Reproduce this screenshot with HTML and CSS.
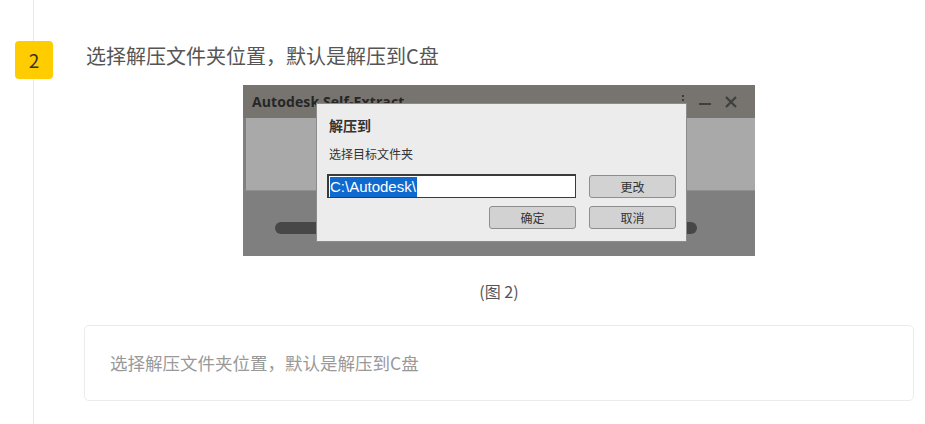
FILE: index.html
```html
<!DOCTYPE html>
<html lang="zh-CN">
<head>
<meta charset="utf-8">
<title>步骤 2</title>
<link rel="stylesheet" href="styles.css">
</head>
<body>
<div class="timeline">
  <div class="step">
    <div class="badge">2</div>
    <div class="content">
      <p class="step-title">选择解压文件夹位置，默认是解压到C盘</p>
      <figure class="figure">
        <div class="shot">
          <div class="win-title">
            <span class="win-name">Autodesk Self-Extract</span>
            <span class="win-ctrls">
              <svg class="ctl-dots" width="4" height="8" viewBox="0 0 4 8"><rect x="1" y="0" width="2" height="2" fill="#3c3c3c"/><rect x="1" y="4" width="2" height="2" fill="#3c3c3c"/></svg>
              <svg class="ctl-min" width="12" height="12" viewBox="0 0 12 12"><rect x="0" y="7" width="12" height="2" fill="#3f3f3f"/></svg>
              <svg class="ctl-close" width="12" height="12" viewBox="0 0 12 12"><path d="M1 1 L11 11 M11 1 L1 11" stroke="#3f3f3f" stroke-width="2.2"/></svg>
            </span>
          </div>
          <div class="win-light"></div>
          <div class="win-dark">
            <div class="progress"></div>
          </div>
          <div class="dialog">
            <div class="dlg-title">解压到</div>
            <div class="dlg-sub">选择目标文件夹</div>
            <div class="dlg-row">
              <div class="dlg-input"><span class="sel">C:\Autodesk\</span></div>
              <div class="dlg-btn">更改</div>
            </div>
            <div class="dlg-row dlg-row-end">
              <div class="dlg-btn">确定</div>
              <div class="dlg-btn">取消</div>
            </div>
          </div>
        </div>
        <figcaption class="caption">(图 2)</figcaption>
      </figure>
      <div class="note">选择解压文件夹位置，默认是解压到C盘</div>
    </div>
  </div>
</div>
</body>
</html>
```

FILE: styles.css
```css
* { box-sizing: border-box; }
html, body { margin: 0; padding: 0; background: #fff; }
body {
  font-family: "Noto Sans CJK SC", "Noto Sans", sans-serif;
  color: #555;
  width: 925px;
  height: 424px;
  overflow: hidden;
}
.timeline {
  margin-left: 33px;
  border-left: 1px solid #e8e8e8;
  min-height: 424px;
  padding-top: 41px;
}
.step { display: flex; align-items: flex-start; }
.badge {
  flex: none;
  margin-left: -19px;
  width: 38px;
  height: 38px;
  border-radius: 4px;
  background: #ffcc00;
  color: #333;
  font-size: 19px;
  line-height: 38px;
  text-align: center;
}
.content {
  margin-left: 31px;
  width: 830px;
}
.step-title {
  margin: 0;
  padding-left: 2px;
  font-size: 20px;
  line-height: 30px;
  color: #555;
}
.figure { margin: 14px 0 0; display: flex; flex-direction: column; align-items: center; }
.shot {
  position: relative;
  width: 512px;
  height: 171px;
  overflow: hidden;
  background: #7f7f7f;
}
.win-title {
  height: 33px;
  background: #77746f;
  display: flex;
  justify-content: space-between;
  align-items: center;
  padding: 0 18px 0 9px;
}
.win-name {
  font-family: "Open Sans", "Liberation Sans", sans-serif;
  font-weight: 700;
  font-size: 14px;
  color: #262626;
  letter-spacing: 0.1px;
}
.win-ctrls { display: flex; align-items: center; gap: 13px; }
.ctl-dots { margin-right: 1px; margin-top: -6px; }
.ctl-close { margin-left: 1px; }
.win-light {
  height: 73px;
  background: #a9a9a9;
  border-left: 3px solid #808080;
  border-bottom: 1px solid #8f8f8f;
}
.win-dark {
  height: 65px;
  padding: 31px 0 0 32px;
}
.progress {
  width: 422px;
  height: 12px;
  border-radius: 6px;
  background: #474747;
}
.dialog {
  position: absolute;
  left: 73px;
  top: 18px;
  width: 371px;
  height: 139px;
  background: #ececec;
  border: 1px solid #8c8c8c;
  padding: 10px 10px 12px 10px;
  color: #333;
}
.dlg-title {
  font-weight: 700;
  font-size: 14px;
  line-height: 22px;
  padding-left: 2px;
  color: #333;
}
.dlg-sub {
  margin-top: 8px;
  font-size: 12px;
  line-height: 20px;
  padding-left: 2px;
  color: #333;
}
.dlg-row {
  margin-top: 10px;
  display: flex;
  justify-content: space-between;
  align-items: center;
}
.dlg-row-end {
  margin-top: 8px;
  justify-content: flex-end;
  gap: 13px;
}
.dlg-input {
  width: 249px;
  height: 24px;
  background: #fff;
  border: 1px solid #3a3a3a;
  border-top-width: 2px;
  border-left-width: 2px;
  padding-left: 1px;
  display: flex;
  align-items: center;
}
.sel {
  background: #0f6ad0;
  color: #fff;
  font-family: "Liberation Sans", Arial, sans-serif;
  font-size: 15px;
  line-height: 20px;
  padding-right: 1px;
}
.dlg-btn {
  width: 87px;
  height: 23px;
  background: #d2d2d2;
  border: 1px solid #8e8e8e;
  border-radius: 3px;
  font-size: 12px;
  line-height: 21px;
  text-align: center;
  color: #333;
}
.caption {
  margin-top: 23px;
  font-size: 16px;
  line-height: 24px;
  color: #555;
}
.note {
  margin-top: 22px;
  height: 76px;
  border: 1px solid #ececec;
  border-radius: 5px;
  padding-left: 25px;
  font-size: 17.5px;
  line-height: 74px;
  color: #999;
}
```
